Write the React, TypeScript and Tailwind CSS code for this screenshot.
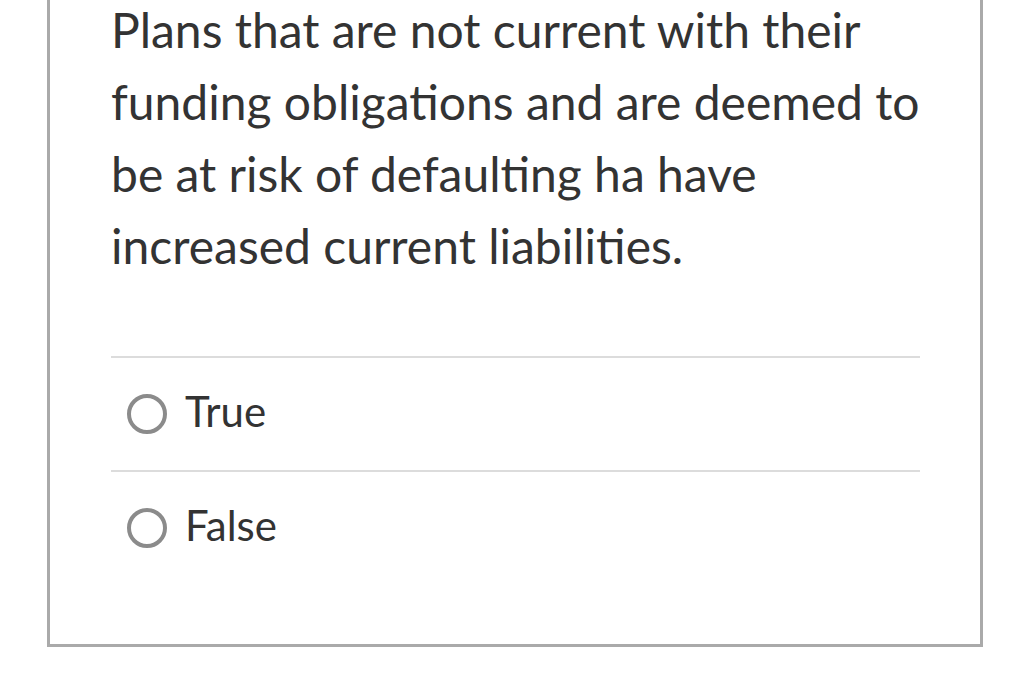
export default function App() {
  return (
    <div className="w-[1031px] h-[685px] bg-white overflow-hidden relative" style={{ fontFamily: "Lato, 'Noto Sans', sans-serif" }}>
      <div className="absolute left-[47px] top-[-20px] w-[936px] h-[667px] border-[3px] border-[#aaaaaa] bg-white">
        <div className="pl-[61px] pr-[60px] pt-[11px]">
          <p className="text-[48px] leading-[72px] text-[#333333]">
            Plans that are not current with their funding obligations and are deemed to be at risk of defaulting ha have increased current liabilities.
          </p>
          <div className="mt-[74px]">
            {["True", "False"].map((t) => (
              <div key={t} className="border-t-2 border-[#dcdcdc] h-[114px] flex items-center">
                <span className="ml-[16px] w-[40px] h-[40px] rounded-full border-[4px] border-[#8b8b8b] shrink-0" />
                <span className="ml-[18px] text-[42px] leading-[50px] text-[#333333] -translate-y-[3px]">{t}</span>
              </div>
            ))}
          </div>
        </div>
      </div>
    </div>
  );
}
